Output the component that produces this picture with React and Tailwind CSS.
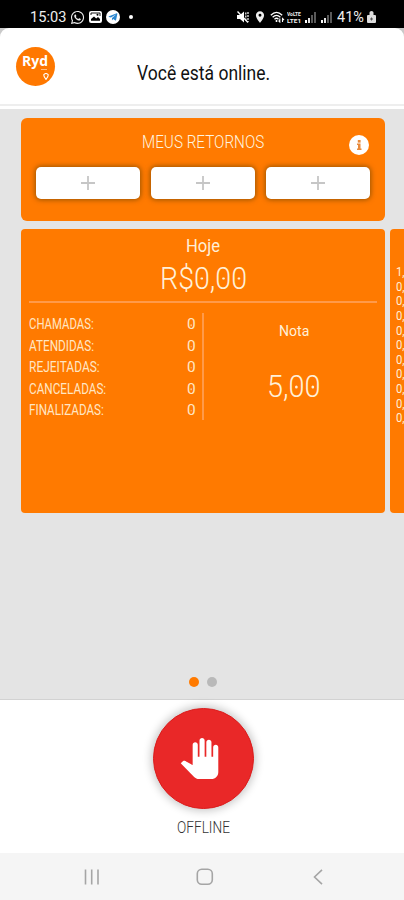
import { useLayoutEffect, useRef, useState } from "react";
import { FaWhatsapp, FaTelegramPlane } from "react-icons/fa";
import { MdPanTool, MdPlace } from "react-icons/md";

// Narrow label: squeezes its text horizontally to the given width.
function Fit({ w, className = "", children }) {
  const ref = useRef(null);
  const [scale, setScale] = useState(1);
  useLayoutEffect(() => {
    if (ref.current) setScale(w / ref.current.offsetWidth);
  }, [w]);
  return (
    <span className={`flex shrink-0 items-center ${className}`} style={{ width: w }}>
      <span
        ref={ref}
        className="shrink-0 origin-left whitespace-nowrap"
        style={{ transform: `scaleX(${scale})` }}
      >
        {children}
      </span>
    </span>
  );
}

function Zero() {
  return (
    <span className="relative inline-block">
      0
      <span className="absolute top-1/2 left-1/2 size-[0.09em] -translate-1/2 rounded-full bg-current" />
    </span>
  );
}

function Signal() {
  return (
    <div className="flex h-[11px] w-[11px] items-end justify-between">
      <i className="h-[3px] w-[2px] bg-white" />
      <i className="h-[5px] w-[2px] bg-white/90" />
      <i className="h-[8px] w-[2px] bg-white/35" />
      <i className="h-[11px] w-[2px] bg-white/35" />
    </div>
  );
}

function StatusBar() {
  return (
    <div className="flex h-7 shrink-0 items-center bg-black pt-[6px] pr-7 pl-[30px] text-[#eeeeee]">
      <Fit w={36} className="text-[15px]">15:03</Fit>
      <FaWhatsapp className="ml-[4px] size-[15px]" />
      <svg className="ml-[4px] h-[12px] w-[13px]" viewBox="0 0 13 12">
        <rect width="13" height="12" rx="2.2" fill="white" />
        <path d="M2 9.8V8l3-2.5 2.2 2L9 6l2 2v1.800z" fill="black" />
        <path d="M2 4V2h9v3" fill="none" stroke="black" strokeWidth=".9" />
        <circle cx="8.500" cy="3.700" r="1" fill="black" />
      </svg>
      <span className="ml-[4px] grid size-[14px] place-items-center rounded-full bg-white">
        <FaTelegramPlane className="mr-px size-[10px] text-[#2a86cf]" />
      </span>
      <span className="ml-[9px] size-[4px] rounded-full bg-white" />
      <div className="ml-auto flex items-center">
        <svg className="h-[12px] w-[12px]" viewBox="0 0 12 12">
          <path d="M0 4h3l4-3.500v11L3 8H0z" fill="white" />
          <path d="M8.800 1.500v9M11 1v10" stroke="white" strokeWidth="1.200" strokeDasharray="2 1" />
          <path d="M.5 .5l10.500 11" stroke="white" strokeWidth="1.300" />
        </svg>
        <MdPlace className="ml-[4px] size-[14px]" />
        <svg className="ml-[3px] h-[12px] w-[15px]" viewBox="0 0 15 12" fill="none" stroke="white" strokeWidth="1.300">
          <path d="M.8 4.200Q6.500-1.500 12.200 4.200M2.600 6.200Q6.500 2.500 10.400 6.200M4.500 8.200Q6.500 6.400 8.500 8.200" />
          <path d="M6.500 9v2" strokeWidth="1.600" />
          <path d="M9.800 7.500v3.500l-1.300-1.300M12.500 11V7.500l1.500 1.500" strokeWidth="1.100" />
        </svg>
        <div className="ml-[2px] flex w-[15px] flex-col text-[6px] leading-[7px] font-bold">
          <Fit w={14}>VoLTE</Fit>
          <Fit w={14}>LTE1</Fit>
        </div>
        <div className="ml-[3px] flex gap-[5px]">
          <Signal />
          <Signal />
        </div>
        <Fit w={27} className="ml-[5px] text-[15px]">41%</Fit>
        <svg className="ml-[3px] h-[12px] w-[9px]" viewBox="0 0 9 12">
          <path d="M2.500 1.500Q2.500 0 4.500 0t2 1.500V4H8q1 0 1 1v6q0 1-1 1H1q-1 0-1-1V5q0-1 1-1h1.500z" fill="#ddd" />
          <path d="M3 8h3M4.500 6.500v3" stroke="#555" />
        </svg>
      </div>
    </div>
  );
}

function Logo() {
  return (
    <div className="flex size-[39px] flex-col rounded-full bg-[#ff7800] pt-[6px] text-white">
      <Fit w={26} className="ml-[5.500px] h-[16px] font-['Open_Sans','Liberation_Sans',sans-serif] text-[14.500px] leading-[16px] font-bold">Ryd</Fit>
      <span className="mr-[8px] h-px w-[6px] self-end bg-white/50" />
      <svg className="mt-[3px] mr-[6px] h-[7px] w-[6px] self-end" viewBox="0 0 6 7">
        <path d="M.7 1.800Q3-.8 5.300 1.800Q5.300 3.500 3 6.500Q.7 3.500 .7 1.800z" fill="none" stroke="white" strokeWidth="1.100" />
      </svg>
    </div>
  );
}

function Returns() {
  return (
    <section className="mr-[19px] ml-[21px] h-[103px] rounded-[6px] bg-[#ff7a00] px-[15px] pt-[14px]">
      <div className="flex h-[35px] items-start">
        <Fit w={122} className="ml-[106px] h-[20px] text-[17.500px] font-light text-[#fff3df]">MEUS RETORNOS</Fit>
        <span className="mt-[3px] mr-px ml-auto grid size-5 place-items-center rounded-full bg-white">
          <svg className="size-5" viewBox="0 0 20 20" fill="#e88a3c">
            <rect x="8.800" y="5" width="2.800" height="2.600" />
            <path d="M8 8.500h3.500v5h1V15H8v-1.500h1V10H8z" />
          </svg>
        </span>
      </div>
      <div className="grid grid-cols-3 gap-[11px]">
        {[0, 1, 2].map((n) => (
          <button key={n} className="grid h-8 place-items-center rounded-[5px] bg-white shadow-[0_0_5px_1px_rgba(90,60,0,0.600)]">
            <svg className="size-[14px]" viewBox="0 0 14 14">
              <path d="M0 7h14M7 0v14" stroke="#c6c6c6" strokeWidth="1.800" />
            </svg>
          </button>
        ))}
      </div>
    </section>
  );
}

const stats = [
  ["CHAMADAS:", 65],
  ["ATENDIDAS:", 65],
  ["REJEITADAS:", 71],
  ["CANCELADAS:", 77],
  ["FINALIZADAS:", 75],
];

function Today() {
  return (
    <section className="flex h-[284px] w-[364px] shrink-0 flex-col rounded-[4px] bg-[#ff7a00] px-2 text-[#fff0d8]">
      <div className="flex h-[72px] flex-col items-center pt-[6px]">
        <Fit w={34} className="h-[22px] text-[19px]">Hoje</Fit>
        <Fit w={87} className="h-[43px] text-[31.500px] font-light">
          R$<Zero />,<Zero /><Zero />
        </Fit>
      </div>
      <div className="h-[2px] bg-[#ff9a4a]" />
      <div className="flex pt-[10px]">
        <div className="h-[107px] w-[173px] pt-[1.500px] pr-[7px]">
          {stats.map(([label, w]) => (
            <div key={label} className="flex h-[21.400px] items-center justify-between text-[14.500px] text-[#ffe6c4]">
              <Fit w={w}>{label}</Fit>
              <Fit w={8.500}><Zero /></Fit>
            </div>
          ))}
        </div>
        <div className="h-[107px] w-[2px] bg-[#ff9a4a]" />
        <div className="flex flex-1 flex-col items-center pt-[8px] pl-[6px]">
          <Fit w={30} className="h-[20px] text-[15px]">Nota</Fit>
          <Fit w={54} className="mt-[35px] h-[22px] text-[31.500px] font-light">
            5,<Zero /><Zero />
          </Fit>
        </div>
      </div>
    </section>
  );
}

function NextCard() {
  const rows = ["1,", "0,", "0,", "0,", "0,", "0,", "0,", "0,", "0,", "0,", "0,"];
  return (
    <section className="h-[284px] w-[364px] shrink-0 rounded-[4px] bg-[#ff7a00] pt-[36px] pl-[6px] text-[#fff0d8]">
      {rows.map((r, i) => (
        <div key={i} className="flex h-[14.650px] items-center text-[12.500px]">
          <Fit w={9}>{r}</Fit>
        </div>
      ))}
    </section>
  );
}

export default function App() {
  return (
    <div className="flex h-[900px] w-[404px] flex-col overflow-hidden bg-[#e4e4e4] font-['Roboto','Liberation_Sans',sans-serif]">
      <StatusBar />
      <div className="shrink-0 bg-[#c9c9c9]">
        <header className="flex h-[81px] flex-col rounded-t-[9px] bg-white">
          <div className="flex h-[76px] items-center pt-px pl-4">
            <Logo />
            <Fit w={133} className="mt-[12px] ml-[82px] text-[20px] text-[#111]">Você está online.</Fit>
          </div>
          <div className="h-[2px] bg-[#eeeeee]" />
        </header>
      </div>
      <main className="flex h-[591px] shrink-0 flex-col border-b border-[#d2d2d2] pt-[9px]">
        <Returns />
        <div className="mt-2 flex gap-[5px] pl-[21px]">
          <Today />
          <NextCard />
        </div>
        <div className="mt-auto mb-[12px] ml-[188.500px] flex items-center gap-2">
          <span className="size-[10.500px] rounded-full bg-[#ff7a00]" />
          <span className="size-[10px] rounded-full bg-[#b9b9b9]" />
        </div>
      </main>
      <footer className="flex h-[153px] shrink-0 flex-col items-center bg-white pt-2">
        <button className="ml-[2px] grid size-[101px] place-items-center rounded-full border border-[#dc1b1b] bg-[#e92828] text-white shadow-[0_0_9px_2px_rgba(0,0,0,0.220)]">
          <MdPanTool className="mr-[7px] size-[41px]" />
        </button>
        <Fit w={53} className="mt-[9px] ml-[2px] h-[20px] text-[16.500px] font-light text-[#333]">OFFLINE</Fit>
      </footer>
      <nav className="flex h-[47px] shrink-0 items-center bg-[#f5f5f5] pt-px pl-[84px] text-[#a5a5a5]">
        <svg className="size-4" viewBox="0 0 16 16" fill="none" stroke="currentColor" strokeWidth="1.600">
          <path d="M1.500 .5v15M7.700 .5v15M14 .5v15" />
        </svg>
        <svg className="ml-[96px] size-[18px]" viewBox="0 0 18 18" fill="none" stroke="currentColor" strokeWidth="1.600">
          <rect x="1.300" y="1.300" width="15" height="15" rx="4.500" />
        </svg>
        <svg className="ml-[99px] h-4 w-[10px]" viewBox="0 0 10 16" fill="none" stroke="currentColor" strokeWidth="1.600">
          <path d="M9 .8L1.500 8L9 15.200" />
        </svg>
      </nav>
    </div>
  );
}
